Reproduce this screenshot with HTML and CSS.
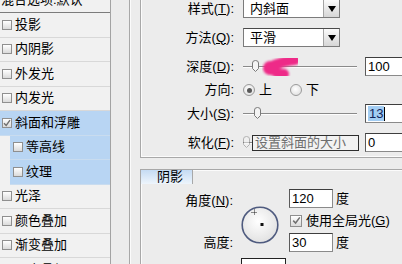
FILE: index.html
```html
<!DOCTYPE html>
<html lang="zh-CN">
  <head>
    <meta charset="UTF-8" />
    <title>图层样式 - 斜面和浮雕</title>
    <link rel="stylesheet" href="styles.css">
  </head>
  <body>
    <div class="dialog">
      <!-- Styles list -->
      <ul class="style-list">
        <li class="style-item header">混合选项:默认</li>
        <li class="style-item"><span class="check"></span>投影</li>
        <li class="style-item"><span class="check"></span>内阴影</li>
        <li class="style-item"><span class="check"></span>外发光</li>
        <li class="style-item"><span class="check"></span>内发光</li>
        <li class="style-item selected">
          <span class="check">
            <svg width="8" height="8" viewBox="0 0 8 8"><path d="M1 4.2 L3.2 6.4 L7 1.2" fill="none" stroke="#6f6f6f" stroke-width="1.4"/></svg>
          </span>斜面和浮雕
        </li>
        <li class="style-item sub selected"><span class="check"></span>等高线</li>
        <li class="style-item sub selected"><span class="check"></span>纹理</li>
        <li class="style-item"><span class="check"></span>光泽</li>
        <li class="style-item"><span class="check"></span>颜色叠加</li>
        <li class="style-item"><span class="check"></span>渐变叠加</li>
        <li class="style-item"><span class="check"></span>图案叠加</li>
      </ul>

      <!-- Settings panel -->
      <div class="panel">
        <div class="outer-group">
          <!-- Structure -->
          <div class="group structure">
            <div class="field-row first">
              <span class="field-label">样式(<u>T</u>):</span>
              <div class="select"><span class="select-value">内斜面</span><span class="select-btn"></span></div>
            </div>
            <div class="field-row">
              <span class="field-label">方法(<u>Q</u>):</span>
              <div class="select"><span class="select-value">平滑</span><span class="select-btn"></span></div>
            </div>
            <div class="field-row">
              <span class="field-label">深度(<u>D</u>):</span>
              <div class="slider">
                <span class="slider-track"></span>
                <svg class="slider-thumb" style="left: 9px" width="7" height="12" viewBox="0 0 7 12"><path d="M0.5 3 Q0.5 0.5 3.5 0.5 Q6.5 0.5 6.5 3 V8.5 L3.5 11.5 L0.5 8.5 Z" fill="#f4f4f4" stroke="#7a7a7a"/></svg>
              </div>
              <div class="num-input">100</div>
            </div>
            <div class="field-row radio-row">
              <span class="field-label">方向:</span>
              <span class="radio on"></span><span class="radio-text">上</span>
              <span class="radio"></span><span class="radio-text">下</span>
            </div>
            <div class="field-row near">
              <span class="field-label">大小(<u>S</u>):</span>
              <div class="slider">
                <span class="slider-track"></span>
                <svg class="slider-thumb" style="left: 11px" width="7" height="12" viewBox="0 0 7 12"><path d="M0.5 3 Q0.5 0.5 3.5 0.5 Q6.5 0.5 6.5 3 V8.5 L3.5 11.5 L0.5 8.5 Z" fill="#f4f4f4" stroke="#7a7a7a"/></svg>
              </div>
              <div class="num-input"><span class="selected-text">13</span><span class="caret"></span></div>
            </div>
            <div class="field-row">
              <span class="field-label">软化(<u>F</u>):</span>
              <div class="slider">
                <span class="slider-track"></span>
                <svg class="slider-thumb faded" style="left: 0px" width="7" height="12" viewBox="0 0 7 12"><path d="M0.5 3 Q0.5 0.5 3.5 0.5 Q6.5 0.5 6.5 3 V8.5 L3.5 11.5 L0.5 8.5 Z" fill="#f4f4f4" stroke="#7a7a7a"/></svg>
                <span class="tooltip">设置斜面的大小</span>
              </div>
              <div class="num-input">0</div>
            </div>
          </div>

          <!-- Shading -->
          <div class="group shading">
            <div class="group-tab">阴影</div>
            <div class="shading-body">
              <div class="shade-labels">
                <span class="angle-label">角度(<u>N</u>):</span>
                <span class="altitude-label">高度:</span>
              </div>
              <svg class="dial" width="38" height="38" viewBox="0 0 38 38">
                <defs>
                  <radialGradient id="dialFill" cx="45%" cy="40%" r="60%">
                    <stop offset="0" stop-color="#ffffff" />
                    <stop offset="1" stop-color="#e2e2e2" />
                  </radialGradient>
                </defs>
                <circle cx="19" cy="19" r="17.8" fill="url(#dialFill)" stroke="#4f5b7f" stroke-width="1.6" />
                <path d="M13.5 3.5 V9.5 M10.5 6.5 H16.5" stroke="#222" stroke-width="1" stroke-dasharray="1 1" />
                <rect x="19.5" y="17" width="3" height="3" fill="#111" />
              </svg>
              <div class="shade-fields">
                <div class="unit-row"><div class="num-input small">120</div><span>度</span></div>
                <div class="check-row">
                  <span class="check big">
                    <svg width="9" height="9" viewBox="0 0 9 9"><path d="M1.2 4.6 L3.6 7 L7.8 1.4" fill="none" stroke="#707070" stroke-width="1.5"/></svg>
                  </span>
                  <span>使用全局光(<u>G</u>)</span>
                </div>
                <div class="unit-row"><div class="num-input small">30</div><span>度</span></div>
              </div>
            </div>
            <div class="gloss-row">
              <span class="contour-box"></span>
            </div>
          </div>
        </div>
      </div>

      <!-- Pink brush mark -->
      <svg class="brush-mark" width="44" height="32" viewBox="0 0 44 32">
        <defs>
          <filter id="soft"><feGaussianBlur stdDeviation="0.9" /></filter>
        </defs>
        <g filter="url(#soft)" stroke="#ee2c88" stroke-linecap="round" stroke-linejoin="round" fill="none">
          <path d="M11 15 Q24 9 36 8" stroke-width="10" />
          <path d="M11 15 Q17 22 25 22" stroke-width="10" />
          <circle cx="11" cy="16" r="5" fill="#ee2c88" stroke-width="4" />
        </g>
      </svg>
    </div>
  </body>
</html>
```

FILE: styles.css
```css
html,
body {
  margin: 0;
  padding: 0;
  overflow: hidden;
}

body {
  width: 402px;
  height: 264px;
  background-color: #ececec;
  font-family: "Liberation Sans", "Noto Sans CJK SC", sans-serif;
  font-size: 13px;
  line-height: 16px;
  color: #000;
}

u {
  text-underline-offset: 1px;
}

.dialog {
  position: relative;
  display: flex;
  align-items: flex-start;
}

/* Left list */
.style-list {
  list-style: none;
  margin: -11.5px 0 0;
  padding: 0;
  width: 110px;
  height: 300px;
  flex: none;
  background-color: #f1f1f1;
  border-right: 1px solid #a3a3a3;
}

.style-item {
  display: flex;
  align-items: center;
  gap: 3px;
  height: 23.5px;
  padding-left: 2px;
  border-bottom: 1px solid #d8d8d8;
  white-space: nowrap;
}

.style-item.header {
  padding-left: 1px;
  border-bottom-color: #7c7c7c;
}

.style-item.selected {
  background-color: #b8d5f3;
  border-bottom-color: #c9dcef;
}

.style-item.sub {
  margin-left: 10px;
  padding-left: 3px;
}

.check {
  width: 8px;
  height: 8px;
  flex: none;
  display: flex;
  align-items: center;
  justify-content: center;
  border: 1px solid #8f8f8f;
  background: linear-gradient(#ffffff, #dadada);
}

.check.big {
  width: 10px;
  height: 10px;
}

/* Right panel */
.panel {
  flex: 1;
  padding-left: 18px;
}

.outer-group {
  width: 300px;
  height: 300px;
  padding-left: 10px;
  border-left: 1px solid #a8a8a8;
  box-shadow: inset 1px 0 #fbfbfb;
}

.group {
  border-left: 1px solid #a8a8a8;
}

.structure {
  padding-bottom: 5px;
  border-bottom: 1px solid #a8a8a8;
  box-shadow: inset 1px -1px #fbfbfb;
}

.field-row {
  display: flex;
  align-items: center;
  height: 19px;
  margin-top: 10px;
  white-space: nowrap;
}

.field-row.first {
  margin-top: -1px;
}

.field-row.radio-row {
  height: 14px;
  margin-top: 7px;
}

.field-row.near {
  margin-top: 7px;
}

.field-label {
  width: 93px;
  flex: none;
  text-align: right;
  margin-right: 8px;
}

.select {
  display: flex;
  width: 97px;
  height: 19px;
  margin-left: 1px;
  box-sizing: border-box;
  border: 1px solid #7b7b7b;
  border-top-color: #4a4a4a;
  background-color: #fff;
}

.select-value {
  flex: 1;
  padding-left: 6px;
  line-height: 17px;
}

.select-btn {
  width: 15px;
  display: flex;
  align-items: center;
  justify-content: center;
  border-left: 1px solid #a4a4a4;
  background: linear-gradient(#fbfbfb, #d6d6d6);
}

.select-btn::before {
  content: "";
  border-left: 4px solid transparent;
  border-right: 4px solid transparent;
  border-top: 6px solid #000;
}

.slider {
  position: relative;
  width: 114px;
  height: 19px;
  margin-left: 1px;
  flex: none;
}

.slider-track {
  position: absolute;
  left: 0;
  right: 0;
  top: 9px;
  height: 1px;
  background-color: #8a8a8a;
  box-shadow: 0 1px #fdfdfd;
}

.slider-thumb {
  position: absolute;
  top: 3px;
}

.slider-thumb.faded {
  opacity: 0.5;
}

.tooltip {
  position: absolute;
  left: 9px;
  top: 2px;
  width: 103px;
  height: 14px;
  padding-left: 2px;
  border: 1px solid #2e2e2e;
  background-color: #f2f2f2;
  color: #6e6e6e;
  line-height: 14px;
}

.num-input {
  width: 50px;
  height: 19px;
  flex: none;
  margin-left: 8px;
  padding-left: 2px;
  box-sizing: border-box;
  border: 1px solid #8a8a8a;
  border-top-color: #3e3e3e;
  border-left-color: #5a5a5a;
  background-color: #fff;
  line-height: 17px;
  display: flex;
  align-items: center;
}

.num-input.small {
  width: 44px;
  margin-left: 0;
}

.selected-text {
  background-color: #a3cdf3;
  color: #10235a;
  line-height: 15px;
  padding: 0 1px;
}

.caret {
  width: 1px;
  height: 14px;
  background-color: #000;
}

.radio {
  width: 10px;
  height: 10px;
  flex: none;
  margin-left: 1px;
  border-radius: 50%;
  border: 1px solid #9a9a9a;
  background: radial-gradient(circle at 45% 40%, #ffffff, #d9d9d9);
  display: flex;
  align-items: center;
  justify-content: center;
}

.radio.on::before {
  content: "";
  width: 5px;
  height: 5px;
  border-radius: 50%;
  background-color: #595959;
}

.radio-text {
  margin-left: 4px;
  margin-right: 17px;
}

/* Shading group */
.shading {
  margin-top: 11px;
  height: 120px;
  border-top: 1px solid #a8a8a8;
  box-shadow: inset 1px 1px #fbfbfb;
}

.group-tab {
  width: 35px;
  height: 14px;
  padding-left: 16px;
  border-right: 1px solid #a8a8a8;
  background: linear-gradient(#c5dbf3, #eef5fc);
  line-height: 14px;
}

.shading-body {
  display: flex;
  align-items: flex-start;
  margin-top: 5px;
}

.shade-labels {
  width: 92px;
  flex: none;
  display: flex;
  flex-direction: column;
  align-items: flex-end;
}

.angle-label {
  margin-top: 4px;
}

.altitude-label {
  margin-top: 26px;
}

.dial {
  flex: none;
  margin-left: 8px;
  margin-top: 17px;
}

.shade-fields {
  margin-left: 10px;
  display: flex;
  flex-direction: column;
  gap: 5px;
}

.unit-row {
  display: flex;
  align-items: center;
  gap: 3px;
}

.check-row {
  display: flex;
  align-items: center;
  gap: 4px;
  height: 15px;
  padding-left: 1px;
  white-space: nowrap;
}

.gloss-row {
  display: flex;
  margin-top: 6px;
  padding-left: 100px;
}

.contour-box {
  width: 43px;
  height: 22px;
  border: 1px solid #222;
  background-color: #fff;
}

/* Annotation */
.brush-mark {
  position: absolute;
  left: 259px;
  top: 52px;
}
```
